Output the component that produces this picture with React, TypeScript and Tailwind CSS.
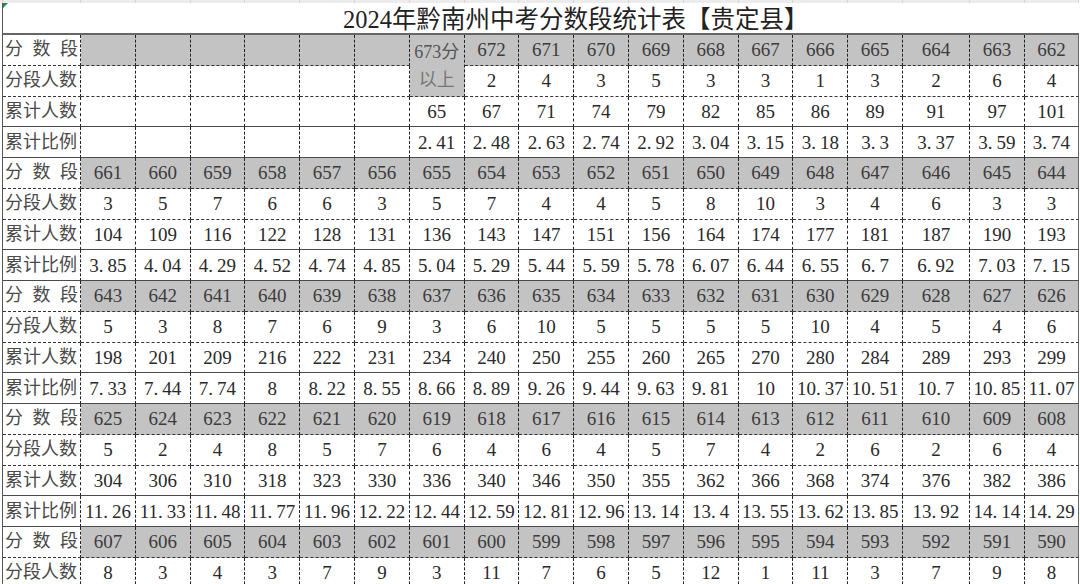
import React from "react";

type Cell = string | number | null;

const blocks: { scores: Cell[]; seg: Cell[]; cum: Cell[]; pct: Cell[] }[] = [
  {
    scores: ["", "", "", "", "", "", "SPAN", 672, 671, 670, 669, 668, 667, 666, 665, 664, 663, 662],
    seg: ["", "", "", "", "", "", null, 2, 4, 3, 5, 3, 3, 1, 3, 2, 6, 4],
    cum: ["", "", "", "", "", "", 65, 67, 71, 74, 79, 82, 85, 86, 89, 91, 97, 101],
    pct: ["", "", "", "", "", "", "2.41", "2.48", "2.63", "2.74", "2.92", "3.04", "3.15", "3.18", "3.3", "3.37", "3.59", "3.74"],
  },
  {
    scores: [661, 660, 659, 658, 657, 656, 655, 654, 653, 652, 651, 650, 649, 648, 647, 646, 645, 644],
    seg: [3, 5, 7, 6, 6, 3, 5, 7, 4, 4, 5, 8, 10, 3, 4, 6, 3, 3],
    cum: [104, 109, 116, 122, 128, 131, 136, 143, 147, 151, 156, 164, 174, 177, 181, 187, 190, 193],
    pct: ["3.85", "4.04", "4.29", "4.52", "4.74", "4.85", "5.04", "5.29", "5.44", "5.59", "5.78", "6.07", "6.44", "6.55", "6.7", "6.92", "7.03", "7.15"],
  },
  {
    scores: [643, 642, 641, 640, 639, 638, 637, 636, 635, 634, 633, 632, 631, 630, 629, 628, 627, 626],
    seg: [5, 3, 8, 7, 6, 9, 3, 6, 10, 5, 5, 5, 5, 10, 4, 5, 4, 6],
    cum: [198, 201, 209, 216, 222, 231, 234, 240, 250, 255, 260, 265, 270, 280, 284, 289, 293, 299],
    pct: ["7.33", "7.44", "7.74", "8", "8.22", "8.55", "8.66", "8.89", "9.26", "9.44", "9.63", "9.81", "10", "10.37", "10.51", "10.7", "10.85", "11.07"],
  },
  {
    scores: [625, 624, 623, 622, 621, 620, 619, 618, 617, 616, 615, 614, 613, 612, 611, 610, 609, 608],
    seg: [5, 2, 4, 8, 5, 7, 6, 4, 6, 4, 5, 7, 4, 2, 6, 2, 6, 4],
    cum: [304, 306, 310, 318, 323, 330, 336, 340, 346, 350, 355, 362, 366, 368, 374, 376, 382, 386],
    pct: ["11.26", "11.33", "11.48", "11.77", "11.96", "12.22", "12.44", "12.59", "12.81", "12.96", "13.14", "13.4", "13.55", "13.62", "13.85", "13.92", "14.14", "14.29"],
  },
  {
    scores: [607, 606, 605, 604, 603, 602, 601, 600, 599, 598, 597, 596, 595, 594, 593, 592, 591, 590],
    seg: [8, 3, 4, 3, 7, 9, 3, 11, 7, 6, 5, 12, 1, 11, 3, 7, 9, 8],
    cum: [],
    pct: [],
  },
];

const dashedBottom =
  "border-r border-b border-r-[#222] border-b-[#333] [border-style:none_dashed_dashed_none]";
const solidBottom =
  "border-r border-b border-r-[#222] border-b-[#4a4a4a] [border-style:none_dashed_solid_none]";
const lastDashed =
  "border-r border-b border-r-[#666] border-b-[#333] [border-style:none_solid_dashed_none]";
const lastSolid =
  "border-r border-b border-r-[#666] border-b-[#4a4a4a] [border-style:none_solid_solid_none]";

function Num({ v }: { v: Cell }) {
  if (v === null || v === "" || v === undefined) return null;
  const s = String(v);
  if (s.includes(".")) {
    const [a, b] = s.split(".");
    return (
      <span className="whitespace-nowrap">
        {a}
        <span className="mr-[4px]">.</span>
        {b}
      </span>
    );
  }
  return <span>{s}</span>;
}

function Row({
  label,
  values,
  gray,
  solid,
  spread,
}: {
  label: string;
  values: Cell[];
  gray?: boolean;
  solid?: boolean;
  spread?: boolean;
}) {
  const border = solid ? solidBottom : dashedBottom;
  const last = solid ? lastSolid : lastDashed;
  return (
    <>
      <div
        className={`${border} bg-white flex items-center text-[18px] text-[#4a4a4a] ${
          spread ? "justify-between px-[2px]" : "pl-[2px]"
        }`}
      >
        {spread
          ? label.split("").map((c, i) => <span key={i}>{c}</span>)
          : label}
      </div>
      {values.map((v, i) => {
        if (v === null) return null;
        if (v === "SPAN") {
          return (
            <div
              key={i}
              className={`${dashedBottom} row-span-2 bg-[#c3c3c3] flex flex-col items-center text-[18px] leading-none text-[#555]`}
            >
              <div className="h-[31px] flex items-center pt-[2px]">673分</div>
              <div className="h-[28px] flex items-center text-[#777]">以上</div>
            </div>
          );
        }
        const isLast = i === values.length - 1;
        return (
          <div
            key={i}
            className={`${isLast ? last : border} ${
              gray ? "bg-[#c3c3c3] text-[#3c3c3c]" : "bg-white text-[#2a2a2a]"
            } flex items-center justify-center text-[19px] leading-none overflow-hidden`}
          >
            <Num v={v} />
          </div>
        );
      })}
    </>
  );
}

export default function App() {
  return (
    <div className="relative w-[1080px] h-[584px] overflow-hidden bg-white font-['Liberation_Serif','Noto_Sans_CJK_SC',serif]">
      <div className="h-[3px] bg-[#ececec] grid grid-cols-[3px_78px_repeat(15,minmax(0,1fr))_67px_55px_54px] w-[1079px]">
        {Array.from({ length: 20 }).map((_, i) => (
          <div key={i} className="border-r border-[#d4d4d4]" />
        ))}
      </div>
      <div className="absolute left-[3px] top-[3px] w-0 h-0 border-t-[5px] border-r-[5px] border-t-[#1f8f3a] border-r-transparent" />
      <div className="ml-[2px] border-l border-[#555] w-[1077px]">
        <div className="h-[30px] flex items-end pl-[340px] pb-[1px] text-[24.5px] leading-none text-[#222] whitespace-nowrap">
          2024年黔南州中考分数段统计表【贵定县】
        </div>
        <div className="w-[1076px] border-t-2 border-[#666] grid grid-cols-[78px_repeat(15,minmax(0,1fr))_67px_55px_54px] auto-rows-[30.75px]">
          {blocks.map((b, bi) => (
            <React.Fragment key={bi}>
              <Row label="分数段" values={b.scores} gray spread />
              <Row label="分段人数" values={b.seg} />
              {b.cum.length > 0 && <Row label="累计人数" values={b.cum} solid />}
              {b.pct.length > 0 && <Row label="累计比例" values={b.pct} solid />}
            </React.Fragment>
          ))}
        </div>
      </div>
    </div>
  );
}
